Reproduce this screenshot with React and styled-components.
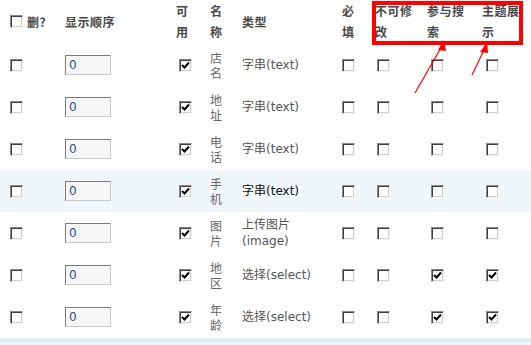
import styled, { createGlobalStyle } from "styled-components";

const GlobalStyle = createGlobalStyle`
  html, body {
    margin: 0;
    padding: 0;
    background: #fff;
    overflow: hidden;
  }
  body {
    font-family: "DejaVu Sans", "Noto Sans CJK SC", sans-serif;
    font-size: 12px;
    color: #555;
  }
`;

const COLS = "65px 111px 34px 32px 100px 33px 52px 55px 49px";

const Page = styled.div`
  position: relative;
  width: 531px;
  height: 345px;
  overflow: hidden;
`;

const Row = styled.div`
  display: grid;
  grid-template-columns: ${COLS};
  align-items: center;
  height: 42px;
  background: ${(p) => (p.$alt ? "#eff7fb" : "transparent")};
`;

const HeadRow = styled(Row)`
  height: 44px;
  box-sizing: border-box;
  padding-bottom: 10px;
  color: #484848;
  font-family: "Noto Sans CJK SC", sans-serif;
  font-weight: 700;
  letter-spacing: 0.5px;
`;

const HeadCell = styled.div`
  display: flex;
  align-items: center;
  gap: 4px;
  padding-left: ${(p) => p.$pad || 0}px;
  line-height: 21px;
  white-space: nowrap;
`;

const Cell = styled.div`
  display: flex;
  align-items: center;
  padding-left: ${(p) => p.$pad || 0}px;
  white-space: nowrap;
`;

const Name = styled(Cell)`
  line-height: 15px;
  font-family: "Noto Sans CJK SC", sans-serif;
  color: #666;
`;

const Type = styled(Cell)`
  line-height: 16px;
  color: ${(p) => (p.$dark ? "#111" : "#555")};
`;

const Box = styled.span`
  display: inline-flex;
  align-items: center;
  justify-content: center;
  width: 13px;
  height: 13px;
  box-sizing: border-box;
  background: #fff;
  border: 1px solid;
  border-color: #8a8a8a #f4f4f4 #f4f4f4 #8a8a8a;
  box-shadow: inset 1px 1px 0 #404040, inset -1px -1px 0 #d4d0c8;
  flex: none;
`;

const OrderInput = styled.span`
  display: flex;
  align-items: center;
  width: 46px;
  height: 20px;
  box-sizing: border-box;
  padding-left: 3px;
  background: #f7f7f7;
  border: 1px solid;
  border-color: #7a7a7a #c8c8c8 #c8c8c8 #7a7a7a;
  color: #2b4f8a;
  font-size: 12px;
`;

const Footer = styled.div`
  height: 30px;
  border-top: 4px solid #deeef9;
  background: #f0f7fc;
`;

const Marker = styled.div`
  position: absolute;
  left: 372px;
  top: 1px;
  width: 151px;
  height: 44px;
  box-sizing: border-box;
  border: 4px solid #ff0000;
  pointer-events: none;
`;

const Arrows = styled.svg`
  position: absolute;
  left: 0;
  top: 0;
  pointer-events: none;
`;

function Check({ on }) {
  return (
    <Box>
      {on && (
        <svg width="9" height="9" viewBox="0 0 9 9">
          <path d="M1 4 L3.5 6.5 L8 1.5" stroke="#000" strokeWidth="2" fill="none" />
        </svg>
      )}
    </Box>
  );
}

const rows = [
  { name: ["店", "名"], type: "字串(text)" },
  { name: ["地", "址"], type: "字串(text)" },
  { name: ["电", "话"], type: "字串(text)" },
  { name: ["手", "机"], type: "字串(text)", alt: true },
  { name: ["图", "片"], type: ["上传图片", "(image)"] },
  { name: ["地", "区"], type: "选择(select)", search: true, show: true },
  { name: ["年", "龄"], type: "选择(select)", search: true, show: true },
];

const heads = [
  ["可", "用"],
  ["名", "称"],
  ["类型"],
  ["必", "填"],
  ["不可修", "改"],
  ["参与搜", "索"],
  ["主题展", "示"],
];

function Lines({ parts }) {
  return (
    <div>
      {parts.map((t, i) => (
        <div key={i}>{t}</div>
      ))}
    </div>
  );
}

export default function App() {
  return (
    <Page>
      <GlobalStyle />
      <HeadRow>
        <HeadCell $pad={10}>
          <Check />
          <span>删?</span>
        </HeadCell>
        <HeadCell>显示顺序</HeadCell>
        {heads.map((h, i) => (
          <HeadCell key={i}>
            <Lines parts={h} />
          </HeadCell>
        ))}
      </HeadRow>
      {rows.map((r, i) => (
        <Row key={i} $alt={r.alt}>
          <Cell $pad={10}>
            <Check />
          </Cell>
          <Cell>
            <OrderInput>0</OrderInput>
          </Cell>
          <Cell $pad={3}>
            <Check on />
          </Cell>
          <Name>
            <Lines parts={r.name} />
          </Name>
          <Type $dark={r.alt}>
            {Array.isArray(r.type) ? <Lines parts={r.type} /> : r.type}
          </Type>
          <Cell>
            <Check />
          </Cell>
          <Cell $pad={2}>
            <Check />
          </Cell>
          <Cell $pad={4}>
            <Check on={r.search} />
          </Cell>
          <Cell $pad={4}>
            <Check on={r.show} />
          </Cell>
        </Row>
      ))}
      <Footer />
      <Marker />
      <Arrows width="531" height="345">
        <line x1="415" y1="93" x2="442" y2="46" stroke="#ff0000" strokeWidth="1.2" />
        <polygon points="444,40 438,50 446,51" fill="#ff0000" />
        <line x1="472" y1="75" x2="484" y2="50" stroke="#ff0000" strokeWidth="1.2" />
        <polygon points="487,42 480,52 488,53" fill="#ff0000" />
      </Arrows>
    </Page>
  );
}
